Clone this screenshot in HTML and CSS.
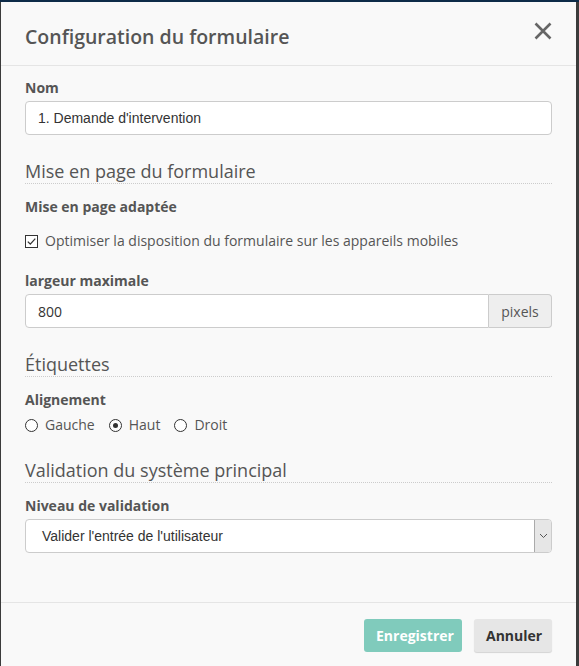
FILE: index.html
```html
<!DOCTYPE html>
<html lang="fr">
<head>
<meta charset="utf-8">
<link rel="stylesheet" href="styles.css">
</head>
<body>
<div class="dialog">
  <div class="dlg-header">
    <h1 class="dlg-title">Configuration du formulaire</h1>
    <span class="close" aria-label="Fermer">
      <svg width="18" height="18" viewBox="0 0 18 18"><path d="M1.5 1.5 L16.5 16.5 M16.5 1.5 L1.5 16.5" stroke="#666" stroke-width="2.6" stroke-linecap="butt"/></svg>
    </span>
  </div>
  <div class="dlg-body">
    <div class="label lbl-first">Nom</div>
    <div class="input">1. Demande d'intervention</div>

    <div class="section">Mise en page du formulaire</div>
    <div class="label">Mise en page adaptée</div>
    <div class="check-row">
      <span class="checkbox"><svg width="13" height="13" viewBox="0 0 13 13"><rect x="0.5" y="0.5" width="12" height="12" fill="#fff" stroke="#333"/><path d="M2.8 6.6 L5.3 9.1 L10.3 3.6" fill="none" stroke="#333" stroke-width="1.3"/></svg></span>
      <span>Optimiser la disposition du formulaire sur les appareils mobiles</span>
    </div>

    <div class="label lbl-after-row">largeur maximale</div>
    <div class="input-group">
      <div class="input grp">800</div>
      <div class="addon">pixels</div>
    </div>

    <div class="section">Étiquettes</div>
    <div class="label">Alignement</div>
    <div class="radio-row">
      <span class="radio"><span class="circle"></span>Gauche</span>
      <span class="radio"><span class="circle on"></span>Haut</span>
      <span class="radio"><span class="circle"></span>Droit</span>
    </div>

    <div class="section sec-tight">Validation du système principal</div>
    <div class="label">Niveau de validation</div>
    <div class="select">
      <span class="select-text">Valider l'entrée de l'utilisateur</span>
      <span class="arrow"><svg width="9" height="6" viewBox="0 0 9 6"><path d="M1 1 L4.5 4.5 L8 1" fill="none" stroke="#555" stroke-width="1"/></svg></span>
    </div>
  </div>
  <div class="dlg-footer">
    <button class="btn btn-primary">Enregistrer</button>
    <button class="btn btn-default">Annuler</button>
  </div>
</div>
</body>
</html>
```

FILE: styles.css
```css
html, body {
  margin: 0;
  padding: 0;
  height: 100%;
}
body {
  background: #3b3b3b;
  border-top: 2px solid #0d2b48;
  box-sizing: border-box;
  font-family: "Open Sans", sans-serif;
  color: #555;
  overflow: hidden;
}
.dialog {
  margin: 0 3px 0 1px;
  height: 664px;
  background: #f9f9f9;
  display: flex;
  flex-direction: column;
  box-sizing: border-box;
}
.dlg-header {
  height: 63px;
  border-bottom: 1px solid #e5e5e5;
  display: flex;
  align-items: center;
  justify-content: space-between;
  padding: 0 24px 0 24px;
}
.dlg-title {
  margin: 7px 0 0 0;
  font-size: 19.5px;
  font-weight: 600;
  color: #555;
  line-height: 24px;
}
.close {
  display: flex;
  width: 18px;
  height: 18px;
  margin-top: -6px;
  margin-right: 0;
}
.dlg-body {
  flex: 1;
  padding: 12px 24px 0 24px;
}
.label {
  font-size: 14px;
  font-weight: 700;
  line-height: 20px;
  color: #555;
  margin-top: 13px;
  margin-bottom: 3px;
}
.lbl-first { margin-top: 0; }
.lbl-after-row { margin-top: 20px; }
.input {
  height: 34px;
  box-sizing: border-box;
  border: 1px solid #ccc;
  border-radius: 4px;
  background: #fff;
  font-family: "Liberation Sans", Arial, sans-serif;
  font-size: 14px;
  color: #333;
  padding: 0 12px;
  display: flex;
  align-items: center;
}
.input-group {
  display: flex;
}
.input.grp {
  flex: 1;
  border-radius: 4px 0 0 4px;
  font-family: "Open Sans", sans-serif;
}
.addon {
  width: 63px;
  box-sizing: border-box;
  height: 34px;
  border: 1px solid #ccc;
  border-left: none;
  border-radius: 0 4px 4px 0;
  background: #eee;
  font-size: 14px;
  color: #555;
  display: flex;
  align-items: center;
  justify-content: center;
}
.section {
  margin-top: 25px;
  font-size: 18px;
  line-height: 22px;
  color: #555;
  padding-bottom: 1px;
  border-bottom: 1px dotted #ccc;
}
.section.sec-tight { margin-top: 24px; }
.check-row {
  margin-top: 14px;
  display: flex;
  align-items: center;
  font-size: 14px;
  line-height: 20px;
  color: #555;
}
.checkbox {
  display: flex;
  margin-right: 7px;
}
.radio-row {
  margin-top: 5px;
  display: flex;
  gap: 14px;
  font-size: 14px;
  line-height: 20px;
  color: #555;
}
.radio {
  display: flex;
  align-items: center;
}
.circle {
  width: 11px;
  height: 11px;
  border: 1px solid #333;
  border-radius: 50%;
  background: #fff;
  margin-right: 7px;
  position: relative;
}
.circle.on::after {
  content: "";
  position: absolute;
  left: 3px;
  top: 3px;
  width: 5px;
  height: 5px;
  border-radius: 50%;
  background: #333;
}
.select {
  height: 34px;
  box-sizing: border-box;
  border: 1px solid #ccc;
  border-radius: 4px;
  background: #fff;
  display: flex;
  align-items: stretch;
}
.select-text {
  flex: 1;
  display: flex;
  align-items: center;
  padding-left: 16px;
  font-family: "Liberation Sans", Arial, sans-serif;
  font-size: 14px;
  color: #333;
}
.arrow {
  width: 16px;
  background: #e6e6e6;
  border-left: 1px solid #aaa;
  border-radius: 0 3px 3px 0;
  display: flex;
  align-items: center;
  justify-content: center;
}
.dlg-footer {
  border-top: 1px solid #e5e5e5;
  height: 64px;
  display: flex;
  justify-content: flex-end;
  align-items: flex-start;
  padding: 16px 24px 0 0;
  gap: 12px;
  box-sizing: border-box;
}
.btn {
  height: 33px;
  border: none;
  border-radius: 3px;
  font-family: "Open Sans", sans-serif;
  font-size: 14px;
  font-weight: 700;
  padding: 0 12px;
}
.btn-primary {
  background: #80cbbc;
  color: #fff;
  width: 98px;
}
.btn-default {
  background: #e6e6e6;
  color: #333;
  width: 78px;
  box-shadow: 0 1px 1px rgba(0,0,0,0.15);
}
```
